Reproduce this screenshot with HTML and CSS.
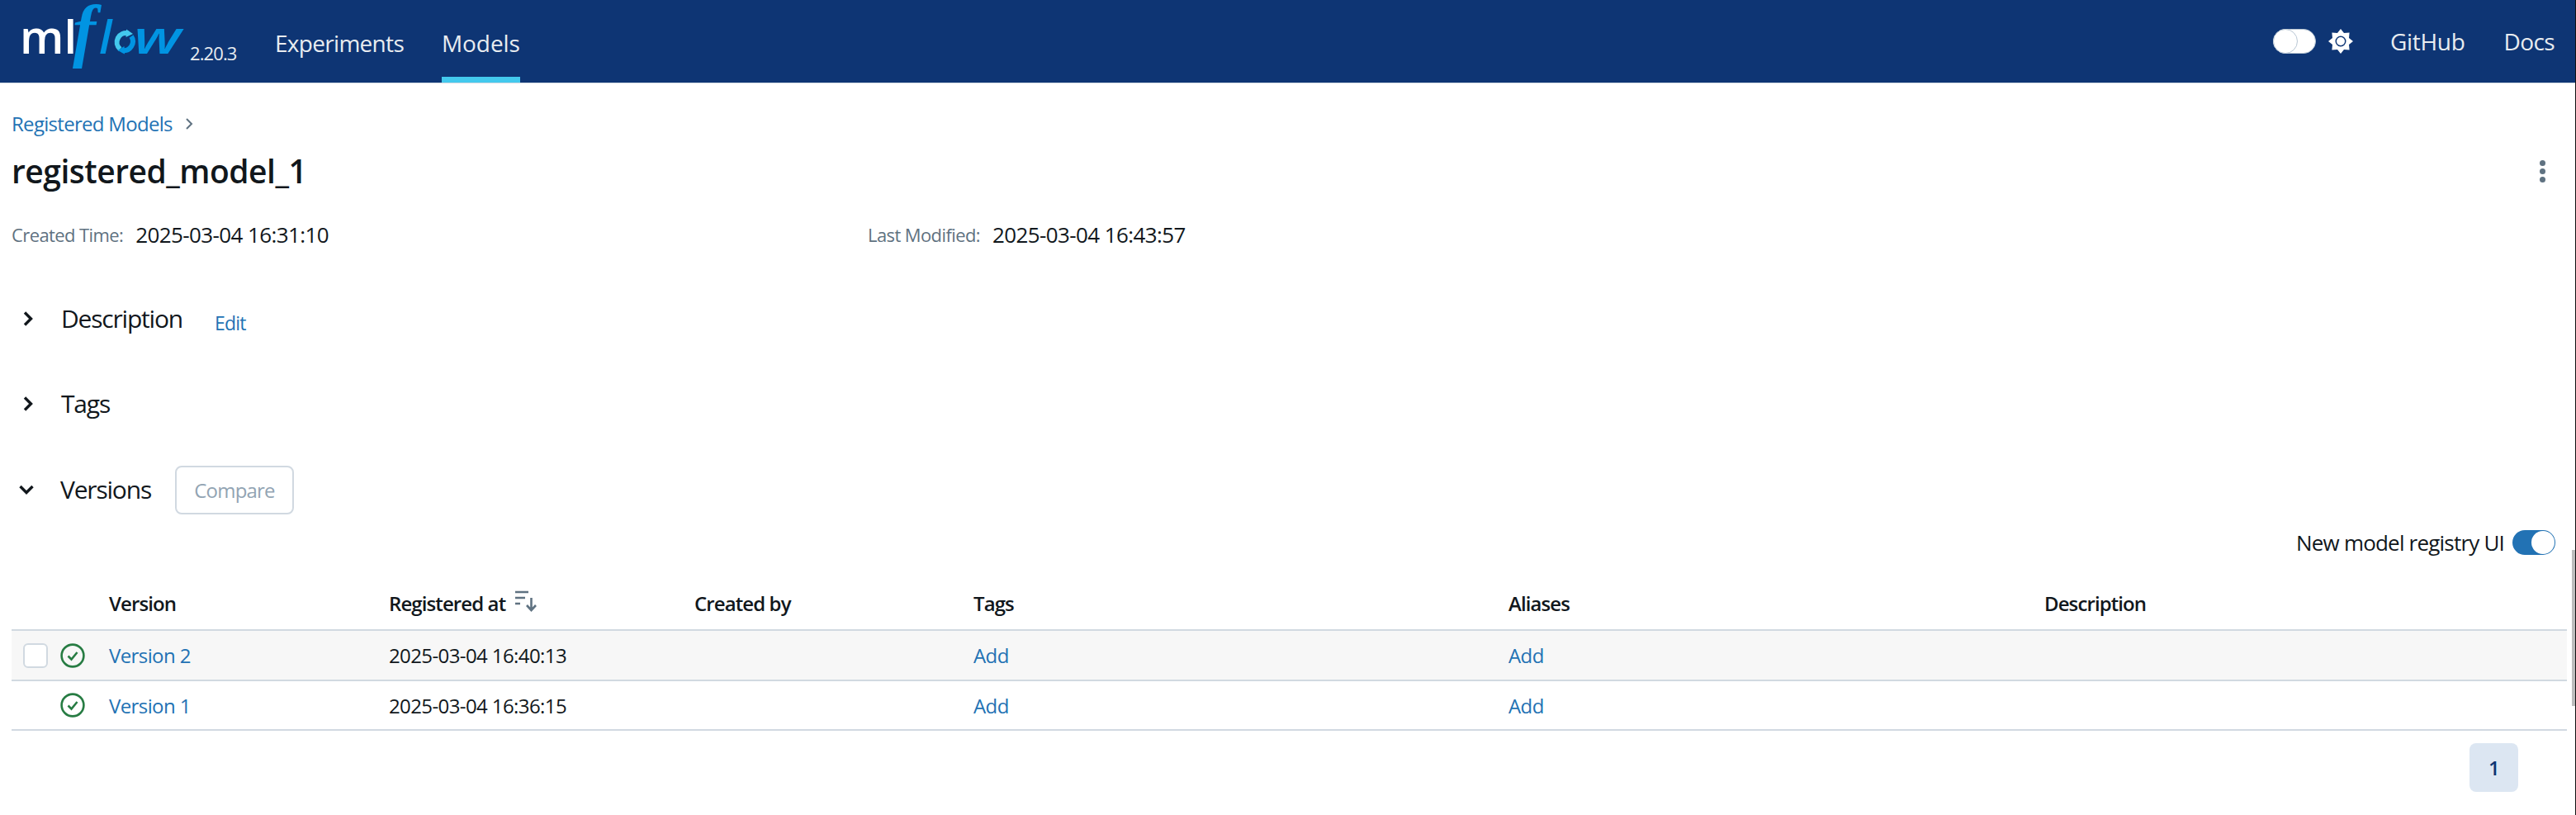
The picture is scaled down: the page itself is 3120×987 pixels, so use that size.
FILE: index.html
```html
<!DOCTYPE html>
<html lang="en">
<head>
<meta charset="utf-8">
<title>registered_model_1 - MLflow Model</title>
<link rel="stylesheet" href="styles.css">
</head>
<body>
<header class="topbar">
  <div class="brand">
    <svg class="logo" width="224" height="100" viewBox="0 0 224 100" aria-label="mlflow">
      <text class="logo-ml" x="24" y="65">ml</text>
      <text class="logo-f" x="88" y="65">f</text>
      <text class="logo-l" x="120" y="65">l</text>
      <path class="logo-o" d="M155.500 40.500 A11 11 0 0 0 145.500 59.500"/>
      <path class="logo-oh" d="M153 35.500 L161 41 L152.500 45 Z"/>
      <path class="logo-o2" d="M159 44 A11 11 0 0 1 148 61"/>
      <path class="logo-oh2" d="M150.500 56 L142.500 61 L151 65.500 Z"/>
      <text class="logo-w" transform="translate(162 65) scale(1.36 1)">w</text>
    </svg>
    <span class="version">2.20.3</span>
  </div>
  <nav class="nav-left">
    <a class="nav-link">Experiments</a>
    <a class="nav-link nav-active">Models</a>
  </nav>
  <div class="nav-right">
    <span class="dark-toggle"><span class="dark-knob"></span></span>
    <svg class="sun" width="30" height="30" viewBox="0 0 30 30">
      <path fill="#fff" fill-rule="evenodd" d="M15 0 L19 5 L25.600 4.400 L25 11 L30 15 L25 19 L25.600 25.600 L19 25 L15 30 L11 25 L4.400 25.600 L5 19 L0 15 L5 11 L4.400 4.400 L11 5 Z M15 8.500 A6.500 6.500 0 1 0 15 21.500 A6.500 6.500 0 1 0 15 8.500 Z"/>
      <circle cx="15" cy="15" r="5" fill="#fff"/>
    </svg>
    <a class="nav-link nav-github">GitHub</a>
    <a class="nav-link nav-docs">Docs</a>
  </div>
</header>
<main class="page">
  <div class="breadcrumb">
    <a class="link">Registered Models</a>
    <svg class="crumb-sep" width="10" height="16" viewBox="0 0 10 16"><path d="M2 2 L8 8 L2 14" fill="none" stroke="#5f7281" stroke-width="2"/></svg>
  </div>
  <div class="title-row">
    <h1 class="title">registered_model_1</h1>
    <span class="kebab"><i></i><i></i><i></i></span>
  </div>
  <div class="meta">
    <div class="meta-item meta-created"><span class="meta-label">Created Time:</span><span class="meta-value">2025-03-04 16:31:10</span></div>
    <div class="meta-item"><span class="meta-label">Last Modified:</span><span class="meta-value">2025-03-04 16:43:57</span></div>
  </div>
  <section class="section section-desc">
    <svg class="chev" width="12" height="18" viewBox="0 0 12 18"><path d="M2 1.500 L9.500 9 L2 16.500" fill="none" stroke="#11171c" stroke-width="3.400"/></svg>
    <h2 class="section-title">Description</h2>
    <a class="link section-edit">Edit</a>
  </section>
  <section class="section section-tags">
    <svg class="chev" width="12" height="18" viewBox="0 0 12 18"><path d="M2 1.500 L9.500 9 L2 16.500" fill="none" stroke="#11171c" stroke-width="3.400"/></svg>
    <h2 class="section-title">Tags</h2>
  </section>
  <section class="section section-versions">
    <svg class="chev-down" width="18" height="12" viewBox="0 0 18 12"><path d="M1.500 2 L9 9.500 L16.500 2" fill="none" stroke="#11171c" stroke-width="3.400"/></svg>
    <h2 class="section-title">Versions</h2>
    <button class="compare" disabled>Compare</button>
  </section>
  <div class="ui-switch">
    <span>New model registry UI</span>
    <span class="switch"><span class="switch-knob"></span></span>
  </div>
  <div class="table">
    <div class="row row-head">
      <div class="cell c-select"></div>
      <div class="cell c-version">Version</div>
      <div class="cell c-registered">Registered at
        <svg class="sort" width="28" height="26" viewBox="0 0 28 26"><path d="M1 2 H17 M1 9 H13 M1 16 H7 M20.500 9 V23 M15 18 L20.500 24 L26 18" fill="none" stroke="#5f7281" stroke-width="2.600"/></svg>
      </div>
      <div class="cell c-created">Created by</div>
      <div class="cell c-tags">Tags</div>
      <div class="cell c-aliases">Aliases</div>
      <div class="cell c-desc">Description</div>
    </div>
    <div class="row row-hover">
      <div class="cell c-select">
        <span class="checkbox"></span>
        <svg class="status" width="30" height="30" viewBox="0 0 30 30"><circle cx="15" cy="15" r="13.400" fill="none" stroke="#277c43" stroke-width="2.600"/><path d="M9.500 15.500 L13.500 19.500 L20.500 11" fill="none" stroke="#277c43" stroke-width="2.600"/></svg>
      </div>
      <div class="cell c-version"><a class="link">Version 2</a></div>
      <div class="cell c-registered">2025-03-04 16:40:13</div>
      <div class="cell c-created"></div>
      <div class="cell c-tags"><a class="link">Add</a></div>
      <div class="cell c-aliases"><a class="link">Add</a></div>
      <div class="cell c-desc"></div>
    </div>
    <div class="row">
      <div class="cell c-select">
        <span class="checkbox checkbox-hidden"></span>
        <svg class="status" width="30" height="30" viewBox="0 0 30 30"><circle cx="15" cy="15" r="13.400" fill="none" stroke="#277c43" stroke-width="2.600"/><path d="M9.500 15.500 L13.500 19.500 L20.500 11" fill="none" stroke="#277c43" stroke-width="2.600"/></svg>
      </div>
      <div class="cell c-version"><a class="link">Version 1</a></div>
      <div class="cell c-registered">2025-03-04 16:36:15</div>
      <div class="cell c-created"></div>
      <div class="cell c-tags"><a class="link">Add</a></div>
      <div class="cell c-aliases"><a class="link">Add</a></div>
      <div class="cell c-desc"></div>
    </div>
  </div>
  <div class="pagination"><span class="page-btn">1</span></div>
</main>
<div class="scroll-track"><div class="scroll-thumb"></div></div>
</body>
</html>
```
FILE: styles.css
```css
* { box-sizing: border-box; }
html, body { margin: 0; height: 987px; overflow: hidden; background: #fff; }
body {
  font-family: "Open Sans", "Noto Sans", sans-serif;
  font-size: 26px;
  letter-spacing: -0.6px;
  color: #11171c;
  position: relative;
}
a { text-decoration: none; }
.link { color: #2272b4; }

.topbar {
  height: 101px;
  background: #0e3574;
  border-bottom: 1px solid #d1d9e1;
  display: flex;
  color: #e8ecf0;
}
.brand { display: flex; width: 333px; }
.logo { flex: none; overflow: visible; }
.logo-ml { font-family: "Open Sans", sans-serif; font-size: 56px; font-weight: 600; fill: #fff; letter-spacing: 0; }
.logo-f { font-family: "Liberation Serif", serif; font-style: italic; font-weight: 700; font-size: 84px; fill: #0194e2; letter-spacing: 0; }
.logo-l, .logo-w { font-family: "Open Sans", sans-serif; font-style: italic; font-size: 56px; font-weight: 600; fill: #0194e2; letter-spacing: 0; }
.logo-o { fill: none; stroke: #43c9ed; stroke-width: 6; }
.logo-oh { fill: #43c9ed; }
.logo-o2 { fill: none; stroke: #0194e2; stroke-width: 6; }
.logo-oh2 { fill: #0194e2; }
.version { font-size: 22px; margin: 49px 0 0 6px; line-height: 30px; color: #e8ecf0; letter-spacing: -0.9px; }
.nav-left { display: flex; gap: 46px; }
.nav-link { font-size: 28px; height: 100px; color: #e8ecf0; letter-spacing: -0.7px; display: block; }
.nav-active { border-bottom: 7px solid #43c9ed; letter-spacing: -0.1px; }
.nav-left .nav-link { line-height: 104px; }
.nav-right { margin-left: auto; display: flex; align-items: center; padding-right: 26px; }
.nav-right .nav-link { line-height: 100px; }
.nav-github { margin-left: 45px; letter-spacing: -0.3px; }
.nav-docs { margin-left: 47px; letter-spacing: -0.6px; }
.dark-toggle { width: 52px; height: 30px; border-radius: 15px; background: #fff; border: 1px solid #b9c7d4; display: block; position: relative; margin-right: 15px; }
.dark-knob { position: absolute; left: -1px; top: -1px; width: 30px; height: 30px; border-radius: 50%; background: #fff; border: 1.5px solid #b9c7d4; }
.sun { display: block; }

.page { padding: 0 11px 0 14px; }
.breadcrumb { height: 30px; margin-top: 34px; display: flex; align-items: center; font-size: 24px; line-height: 30px; letter-spacing: -0.7px; }
.crumb-sep { margin-left: 15px; }
.title-row { display: flex; justify-content: space-between; align-items: center; height: 48px; margin-top: 18px; }
.title { font-size: 39px; font-weight: 600; margin: 0; line-height: 48px; letter-spacing: -0.5px; }
.kebab { display: flex; flex-direction: column; gap: 3px; margin-right: 26px; }
.kebab i { display: block; width: 7px; height: 7px; border-radius: 50%; background: #5f7281; }
.meta { display: flex; height: 34px; margin-top: 36px; align-items: center; }
.meta-item { display: flex; align-items: center; }
.meta-created { width: 1037px; }
.meta-label { font-size: 22px; color: #5f7281; letter-spacing: -0.6px; margin-right: 15px; }
.meta-value { font-size: 26px; }

.section { display: flex; align-items: center; height: 60px; }
.section-title { font-size: 30px; font-weight: 400; margin: 0; line-height: 40px; letter-spacing: -1.2px; }
.chev { margin: 0 34px 0 14px; flex: none; }
.chev-down { margin: 0 32px 0 9px; flex: none; }
.section-desc { margin-top: 55px; }
.section-edit { font-size: 23px; margin-left: 39px; margin-top: 10px; letter-spacing: -0.8px; }
.section-tags { margin-top: 43px; }
.section-versions { margin-top: 44px; }
.compare { margin-left: 29px; width: 144px; height: 59px; border: 2px solid #d1d9e1; border-radius: 8px; background: #fff; color: #92a4b3; font: inherit; font-size: 24px; padding: 0; letter-spacing: -0.8px; }

.ui-switch { display: flex; justify-content: flex-end; align-items: center; height: 30px; margin-top: 19px; padding-right: 14px; gap: 10px; letter-spacing: -0.8px; }
.switch { width: 52px; height: 30px; border-radius: 15px; background: #2272b4; display: block; position: relative; }
.switch-knob { position: absolute; right: 1px; top: 1px; width: 28px; height: 28px; border-radius: 50%; background: #fff; }

.table { margin-top: 40px; font-size: 24px; }
.row { display: flex; height: 61px; border-bottom: 2px solid #d1d9e1; align-items: center; }
.row:last-child { height: 60px; }
.row-head { height: 52px; padding-top: 2px; align-items: flex-start; font-weight: 600; font-size: 24px; line-height: 34px; letter-spacing: -0.9px; }
.row-hover { background: #f7f7f7; }
.cell { flex: none; display: flex; align-items: center; }
.c-select { width: 118px; gap: 15px; padding-left: 14px; height: 30px; }
.c-version { width: 339px; }
.c-registered { width: 370px; gap: 11px; position: relative; }
.c-created { width: 338px; }
.c-tags { width: 648px; }
.c-aliases { width: 649px; }
.c-desc { flex: 1; }
.row-head .cell { height: auto; }
.sort { margin-top: -6px; }
.checkbox { width: 30px; height: 30px; border: 2px solid #d1d9e1; border-radius: 6px; background: #fff; display: block; flex: none; }
.checkbox-hidden { visibility: hidden; }
.status { flex: none; display: block; }

.pagination { display: flex; justify-content: flex-end; margin-top: 15px; padding-right: 59px; }
.page-btn { width: 59px; height: 59px; border-radius: 8px; background: #dce6f2; color: #0e3574; font-weight: 600; font-size: 24px; display: flex; align-items: center; justify-content: center; }

.scroll-track { position: absolute; right: 0; top: 0; bottom: 0; width: 5px; border-right: 1px solid #111; }
.scroll-thumb { position: absolute; left: 0; top: 666px; width: 4px; height: 189px; background: #bdbdbd; }
```
